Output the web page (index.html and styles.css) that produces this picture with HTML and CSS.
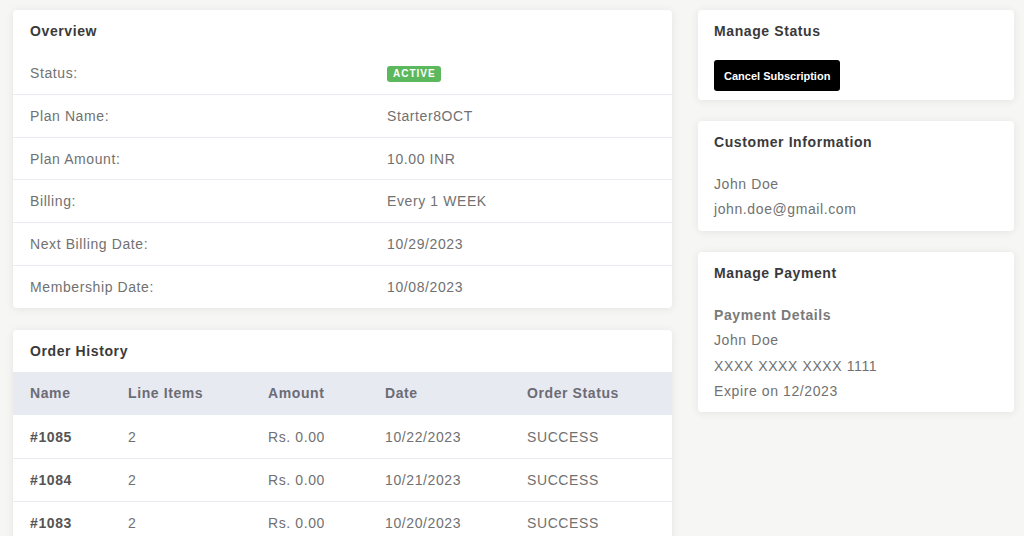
FILE: index.html
```html
<!DOCTYPE html>
<html lang="en">
<head>
    <meta charset="UTF-8">
    <meta name="viewport" content="width=device-width, initial-scale=1.0">
    <title>Subscription Details</title>
    <link rel="stylesheet" href="styles.css">
</head>
<body>

<div class="page">
    <div class="main-col">
        <div class="card">
            <div class="card-title">Overview</div>
            <div class="info-row">
                <span class="info-label">Status:</span>
                <span class="info-value"><span class="badge">Active</span></span>
            </div>
            <div class="info-row">
                <span class="info-label">Plan Name:</span>
                <span class="info-value">Starter8OCT</span>
            </div>
            <div class="info-row">
                <span class="info-label">Plan Amount:</span>
                <span class="info-value">10.00 INR</span>
            </div>
            <div class="info-row">
                <span class="info-label">Billing:</span>
                <span class="info-value">Every 1 WEEK</span>
            </div>
            <div class="info-row">
                <span class="info-label">Next Billing Date:</span>
                <span class="info-value">10/29/2023</span>
            </div>
            <div class="info-row">
                <span class="info-label">Membership Date:</span>
                <span class="info-value">10/08/2023</span>
            </div>
        </div>

        <div class="card">
            <div class="card-title">Order History</div>
            <table class="orders">
                <thead>
                    <tr>
                        <th class="col-name">Name</th>
                        <th class="col-items">Line Items</th>
                        <th class="col-amount">Amount</th>
                        <th class="col-date">Date</th>
                        <th>Order Status</th>
                    </tr>
                </thead>
                <tbody>
                    <tr>
                        <td class="order-no">#1085</td>
                        <td>2</td>
                        <td>Rs. 0.00</td>
                        <td>10/22/2023</td>
                        <td>SUCCESS</td>
                    </tr>
                    <tr>
                        <td class="order-no">#1084</td>
                        <td>2</td>
                        <td>Rs. 0.00</td>
                        <td>10/21/2023</td>
                        <td>SUCCESS</td>
                    </tr>
                    <tr>
                        <td class="order-no">#1083</td>
                        <td>2</td>
                        <td>Rs. 0.00</td>
                        <td>10/20/2023</td>
                        <td>SUCCESS</td>
                    </tr>
                    <tr>
                        <td class="order-no">#1082</td>
                        <td>2</td>
                        <td>Rs. 0.00</td>
                        <td>10/19/2023</td>
                        <td>SUCCESS</td>
                    </tr>
                </tbody>
            </table>
        </div>
    </div>

    <div class="side-col">
        <div class="card">
            <div class="card-title side">Manage Status</div>
            <div class="card-body status-body">
                <button class="cancel-btn">Cancel Subscription</button>
            </div>
        </div>

        <div class="card">
            <div class="card-title side">Customer Information</div>
            <div class="card-body">
                <div class="line">John Doe</div>
                <div class="line">john.doe@gmail.com</div>
            </div>
        </div>

        <div class="card">
            <div class="card-title side">Manage Payment</div>
            <div class="card-body">
                <div class="line sub-title">Payment Details</div>
                <div class="line">John Doe</div>
                <div class="line">XXXX XXXX XXXX 1111</div>
                <div class="line">Expire on 12/2023</div>
            </div>
        </div>
    </div>
</div>

</body>
</html>
```

FILE: styles.css
```css
body {
    margin: 0;
    background-color: #f6f6f5;
    font-family: 'Liberation Sans', Arial, sans-serif;
    font-size: 14px;
    letter-spacing: 0.6px;
    color: #717171;
    overflow: hidden;
}

.page {
    display: grid;
    grid-template-columns: 659px 316px;
    column-gap: 26px;
    align-items: start;
    padding: 10px 10px 0 13px;
}

.main-col {
    display: flex;
    flex-direction: column;
    gap: 22px;
}

.side-col {
    display: flex;
    flex-direction: column;
    gap: 21px;
}

.card {
    background-color: #ffffff;
    border-radius: 4px;
    box-shadow: 0 1px 8px rgba(0, 0, 0, 0.08);
    overflow: hidden;
}

.card-title {
    padding: 12px 17px;
    line-height: 18px;
    font-weight: bold;
    color: #3a3a3a;
}

.card-title.side {
    padding: 12px 16px;
}

/* Overview rows */
.info-row {
    display: flex;
    padding: 12px 17px 11.8px;
    line-height: 18px;
    border-bottom: 1px solid #ecebf1;
}

.info-row:last-child {
    border-bottom: none;
}

.info-label {
    width: 357px;
}

.badge {
    display: inline-block;
    background-color: #5cb85c;
    color: #ffffff;
    font-size: 10px;
    font-weight: bold;
    letter-spacing: 1px;
    text-transform: uppercase;
    line-height: 16px;
    padding: 0 5px 0 6px;
    border-radius: 3px;
    vertical-align: 1px;
}

/* Order table */
.orders {
    width: 100%;
    border-collapse: collapse;
}

.orders th,
.orders td {
    text-align: left;
    padding: 12px 17px;
    line-height: 18px;
}

.orders th {
    background-color: #e8eaf2;
    color: #6c6c76;
    font-weight: bold;
    padding-bottom: 13px;
}

.orders td {
    border-top: 1px solid #ecebf1;
}

.orders tbody tr:first-child td {
    border-top: none;
    padding-top: 13px;
}

.col-name { width: 64px; }
.col-items { width: 106px; }
.col-amount { width: 83px; }
.col-date { width: 108px; }

.order-no {
    font-weight: bold;
    color: #555555;
}

/* Side cards */
.card-body {
    padding: 9px 16px 8px;
}

.status-body {
    padding: 8px 16px 9px;
}

.line {
    line-height: 25.4px;
}

.sub-title {
    font-weight: bold;
    color: #7a7a7a;
}

.cancel-btn {
    background-color: #000000;
    color: #ffffff;
    border: none;
    border-radius: 3px;
    height: 31px;
    padding: 0 10px;
    font-family: 'Liberation Sans', Arial, sans-serif;
    font-size: 11px;
    font-weight: bold;
    letter-spacing: 0;
    cursor: pointer;
    display: block;
}
```
